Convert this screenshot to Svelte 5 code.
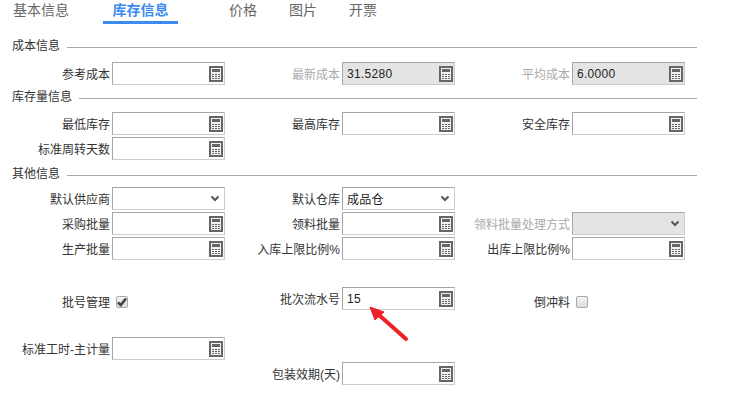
<script>
  const tabs = ["基本信息", "库存信息", "价格", "图片", "开票"];
  const activeTab = "库存信息";

  // kind: calc | select | check | empty
  const sections = [
    {
      title: "成本信息",
      cls: "first",
      rows: [
        [
          { label: "参考成本", kind: "calc" },
          { label: "最新成本", kind: "calc", value: "31.5280", disabled: true },
          { label: "平均成本", kind: "calc", value: "6.0000", disabled: true },
        ],
      ],
    },
    {
      title: "库存量信息",
      cls: "second",
      rows: [
        [
          { label: "最低库存", kind: "calc" },
          { label: "最高库存", kind: "calc" },
          { label: "安全库存", kind: "calc" },
        ],
        [{ label: "标准周转天数", kind: "calc" }],
      ],
    },
    {
      title: "其他信息",
      cls: "third",
      rows: [
        [
          { label: "默认供应商", kind: "select" },
          { label: "默认仓库", kind: "select", value: "成品仓" },
        ],
        [
          { label: "采购批量", kind: "calc" },
          { label: "领料批量", kind: "calc" },
          { label: "领料批量处理方式", kind: "select", disabled: true },
        ],
        [
          { label: "生产批量", kind: "calc" },
          { label: "入库上限比例%", kind: "calc" },
          { label: "出库上限比例%", kind: "calc" },
        ],
        [],
        [
          { label: "批号管理", kind: "check", checked: true },
          { label: "批次流水号", kind: "calc", value: "15" },
          { label: "倒冲料", kind: "check" },
        ],
        [],
        [{ label: "标准工时-主计量", kind: "calc" }],
        [{ kind: "empty" }, { label: "包装效期(天)", kind: "calc" }],
      ],
    },
  ];
</script>

<div class="page">
  <nav class="tabs">
    {#each tabs as tab}
      <div class="tab" class:active={tab === activeTab}>{tab}</div>
    {/each}
  </nav>

  {#each sections as section}
    <div class="heading {section.cls}">
      <span>{section.title}</span>
      <i></i>
    </div>
    {#each section.rows as row}
      <div class="row">
        {#each row as item}
          <div class="item" class:check={item.kind === "check"}>
            <label class:muted={item.disabled}>{item.label ?? ""}</label>
            {#if item.kind === "check"}
              <div class="checkbox">
                {#if item.checked}
                  <svg width="10" height="10" viewBox="0 0 10 10">
                    <path d="M1 5.5 3.8 8 9 1.5" fill="none" stroke="#444" stroke-width="2.6" />
                  </svg>
                {/if}
              </div>
            {:else if item.kind !== "empty"}
              <div class="field" class:disabled={item.disabled}>
                <span class="value">{item.value ?? ""}</span>
                {#if item.kind === "calc"}
                  <svg class="calc" width="14" height="16" viewBox="0 0 14 16">
                    <rect width="14" height="16" fill="#666" />
                    <rect x="2" y="2" width="10" height="12" fill="#f1f1f1" />
                    <rect x="3" y="3" width="8" height="3" fill="#666" />
                    <path
                      d="M3 8h2v1H3zM6 8h2v1H6zM9 8h2v1H9zM3 10h2v1H3zM6 10h2v1H6zM9 10h2v1H9zM3 12h2v1H3zM6 12h2v1H6zM9 12h2v1H9z"
                      fill="#666"
                    />
                  </svg>
                {:else}
                  <svg class="chevron" width="10" height="7" viewBox="0 0 10 7">
                    <path d="M1.5 1.5 5 5 8.5 1.5" fill="none" stroke="#555" stroke-width="2" />
                  </svg>
                {/if}
              </div>
            {/if}
          </div>
        {/each}
      </div>
    {/each}
  {/each}

  <svg class="arrow" width="44" height="42" viewBox="0 0 44 42">
    <path d="M37 36 10 12" stroke="#ee2226" stroke-width="4" stroke-linecap="round" />
    <path d="M1 4 15 9 6 17Z" fill="#ee2226" stroke="#ee2226" stroke-width="1" />
  </svg>
</div>

<style>
  :global(body) {
    background: #fff;
  }

  .page {
    position: relative;
    width: 747px;
    height: 405px;
    overflow: hidden;
    font-family: "Liberation Sans", "Noto Sans CJK SC", sans-serif;
    font-size: 12px;
    color: #333;
  }

  .tabs {
    display: flex;
    gap: 32px;
    height: 23px;
    padding-top: 1px;
    padding-left: 13px;
    font-size: 14px;
    line-height: 18px;
    color: #666;
  }

  .tab.active {
    height: 20px;
    margin: 0 19px 0 2px;
    padding: 0 9.5px;
    border-bottom: 3px solid #3b8bf0;
    color: #3b8bf0;
    font-weight: 700;
  }

  .heading {
    display: flex;
    align-items: center;
    gap: 7px;
    width: 685px;
    height: 14px;
    padding-left: 12px;
    line-height: 14px;
  }

  .heading span {
    position: relative;
    top: -1px;
  }

  .heading i {
    flex: 1;
    height: 1px;
    background: #a9a9a9;
  }

  .heading.first {
    margin: 16px 0 8px;
  }

  .heading.second {
    margin: 6px 0 7px;
  }

  .heading.third {
    margin: 8px 0 5px;
  }

  .row {
    display: flex;
    height: 23px;
    margin-bottom: 2px;
  }

  .item {
    display: flex;
    align-items: center;
    gap: 2px;
    width: 230px;
  }

  .item.check {
    padding-top: 3px;
    box-sizing: border-box;
    height: 26px;
  }

  label {
    width: 110px;
    text-align: right;
    white-space: nowrap;
  }

  label.muted {
    color: #aaa;
  }

  .field {
    display: flex;
    align-items: center;
    justify-content: space-between;
    box-sizing: border-box;
    width: 113px;
    height: 23px;
    padding: 0 1px 0 4px;
    border: 1px solid;
    border-color: #a6a6a6 #ccc #ccc #a6a6a6;
    background: #fff;
  }

  .field.disabled {
    background: #e4e4e4;
  }

  .value {
    color: #222;
    letter-spacing: 0.3px;
  }

  .calc {
    flex: none;
  }

  .chevron {
    flex: none;
    margin-right: 3px;
  }

  .checkbox {
    display: flex;
    align-items: center;
    justify-content: center;
    box-sizing: border-box;
    width: 12px;
    height: 12px;
    margin-left: 4px;
    border: 1px solid #aaa;
    border-radius: 2px;
    background: linear-gradient(#f4f4f4, #dcdcdc);
  }

  .arrow {
    position: absolute;
    left: 369px;
    top: 303px;
  }
</style>
